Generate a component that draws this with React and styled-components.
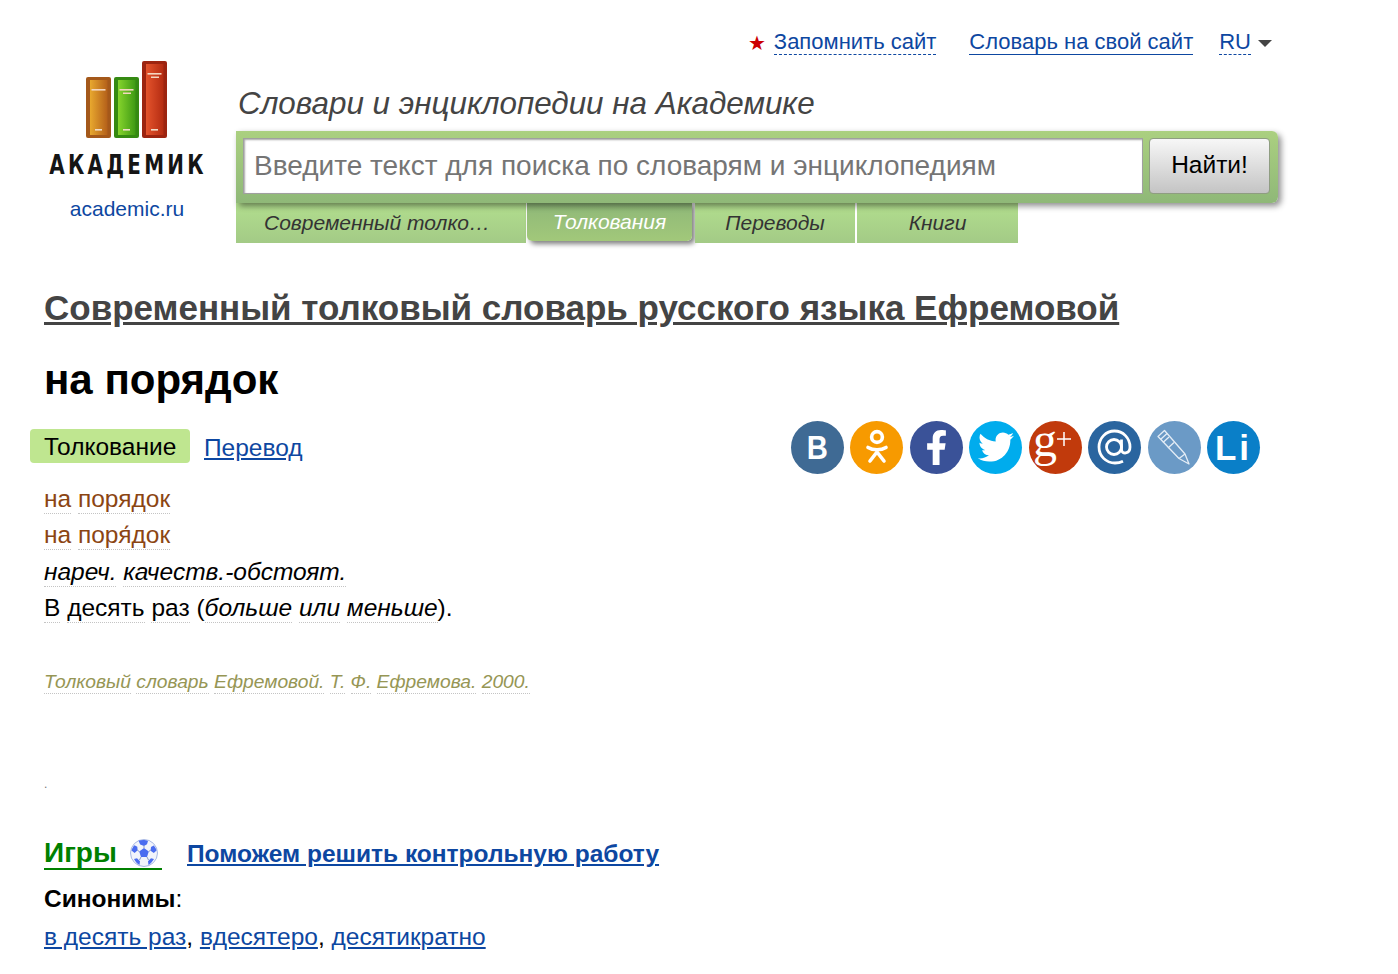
import React from "react";
import styled, { createGlobalStyle } from "styled-components";
import { FaFacebookF, FaTwitter } from "react-icons/fa";

const Global = createGlobalStyle`
  html, body { margin: 0; padding: 0; background: #fff; }
  body { font-family: "Liberation Sans", Arial, sans-serif; color: #000; }
  a { color: #0d47a1; }
`;

const Page = styled.div`width: 1398px; min-height: 974px; box-sizing: border-box; overflow: hidden;`;
const Header = styled.header`display: flex; padding: 29px 0 0 18px;`;
const LogoColumn = styled.div`width: 218px; display: flex; flex-direction: column; align-items: center; padding-top: 31px;`;
const LogoWord = styled.div`
  font-family: "DejaVu Sans Condensed", "DejaVu Sans", sans-serif; font-weight: 700; font-size: 27px; line-height: 32px;
  letter-spacing: 4px; margin-top: 9px; color: #151515; transform: translateX(1px) scaleX(.82); white-space: nowrap;
`;
const LogoLink = styled.a`font-size: 21px; line-height: 24px; margin-top: 16px; text-decoration: none; color: #0d47a1;`;
const HeaderMain = styled.div`width: 1044px;`;
const TopLinks = styled.div`display: flex; justify-content: flex-end; align-items: flex-start; height: 26px; padding-right: 8px; font-size: 22px; line-height: 26px;`;
const Star = styled.span`color: #cc0000; font-size: 20px; margin-right: 8px; line-height: 28px;`;
const TopLink = styled.a`
  text-decoration: none; color: #0d47a1; height: 25px; border-bottom: 1px ${p => p.$dashed ? "dashed" : "solid"} #0d47a1; margin-right: ${p => p.$gap || 0}px;
`;
const Caret = styled.span`width: 0; height: 0; border-left: 7px solid transparent; border-right: 7px solid transparent; border-top: 7px solid #444; margin: 11px 0 0 7px;`;
const Tagline = styled.div`font-size: 31.4px; font-style: italic; color: #444; line-height: 36px; margin: 31px 0 9px 2px; white-space: nowrap;`;
const SearchBar = styled.form`
  width: 1042px; height: 72px; box-sizing: border-box; padding: 7px 8px 9px 7px; display: flex; gap: 6px; position: relative; z-index: 2;
  background: linear-gradient(#abd080, #8fb878); border-radius: 0 6px 6px 0; box-shadow: 3px 3px 6px rgba(0,0,0,.45); margin: 0;
`;
const SearchInput = styled.input`
  flex: 1; min-width: 0; box-sizing: border-box; height: 56px; padding: 0 10px; font: 28px "Liberation Sans", Arial, sans-serif;
  background: #fff; border: 1px solid #a0a0a0; outline: none; box-shadow: inset 1px 1px 2px rgba(0,0,0,.35);
  &::placeholder { color: #757575; opacity: 1; }
`;
const SearchButton = styled.button`
  width: 121px; height: 56px; box-sizing: border-box; font: 24.5px "Liberation Sans", Arial, sans-serif; color: #000;
  background: linear-gradient(#f7f7f7, #c4c4c4); border: 1px solid #8f9d82; border-radius: 4px; padding: 0 0 3px;
`;
const Tabs = styled.nav`display: flex; height: 40px;`;
const Tab = styled.div`
  width: ${p => p.$w}px; margin-right: ${p => p.$mr ?? 2}px; padding-right: ${p => p.$pr || 0}px; display: flex; align-items: center; justify-content: center; height: 40px; box-sizing: border-box;
  font-size: 21px; font-style: italic; color: #333; white-space: nowrap;
  background: linear-gradient(#b2de8e, #a3ca86);
`;
const ActiveTab = styled(Tab)`
  height: 38px; color: #fff; background: linear-gradient(#8fb878, #a2c87a); border-radius: 0 0 5px 5px;
  box-shadow: 3px 3px 5px rgba(0,0,0,.5);
`;
const Content = styled.main`padding: 41px 0 0 44px;`;
const DictTitle = styled.a`display: block; font-size: 35px; font-weight: 700; color: #444; line-height: 48px; text-decoration: underline; white-space: nowrap; width: max-content;`;
const Word = styled.h1`font-size: 42px; font-weight: 700; line-height: 48px; margin: 24px 0 0; color: #000;`;
const ArticleBar = styled.div`display: flex; justify-content: space-between; align-items: center; margin: 17px 0 0 -14px; width: 1230px; height: 54px;`;
const Switch = styled.div`display: flex; align-items: flex-start; height: 36px; margin-top: -2px;`;
const Badge = styled.span`background: #bfe690; border-radius: 4px; height: 34px; line-height: 36px; padding: 0 14px; font-size: 24.5px; width: 132px;`;
const SwitchLink = styled.a`margin: 1px 0 0 14px; line-height: 36px; font-size: 24.5px; color: #0d47a1;`;
const Shares = styled.div`display: flex; gap: 6.5px; margin-top: -2px;`;
const Share = styled.a`
  width: 53px; height: 53px; border-radius: 50%; background: ${p => p.$bg}; color: #fff; display: flex; align-items: center; justify-content: center; flex: none;
  font-family: "Liberation Sans", Arial, sans-serif; font-weight: 700; font-size: ${p => p.$size || 30}px; letter-spacing: ${p => p.$ls || 0}px; text-decoration: none; line-height: 1;
`;
const NarrowB = styled.span`display: block; transform: scaleX(.86);`;
const GPlus = styled.span`font-family: "Liberation Serif", serif; font-weight: 400; font-size: 48px; margin: -14px 0 0 -6px; display: flex; align-items: flex-start;`;
const Article = styled.div`margin-top: 6px; font-size: 24.5px; line-height: 36.4px;`;
const Line = styled.div`color: ${p => p.$c || "#000"}; font-style: ${p => p.$i ? "italic" : "normal"};`;
const Dotted = styled.span`border-bottom: 1px dotted #c4c4c4; padding-bottom: 1px; font-style: ${p => p.$i ? "italic" : "inherit"};`;
const Source = styled.div`margin-top: 40.4px; font-size: 19.25px; line-height: 29px; font-style: italic; color: #969655;`;
const Dot = styled.div`margin-top: 78px; font-size: 12px; line-height: 20px; color: #777;`;
const Promo = styled.div`display: flex; align-items: baseline; margin-top: 44px;`;
const GamesLink = styled.a`display: inline-flex; align-items: center; font-size: 28px; font-weight: 700; color: #008000; text-decoration: none; border-bottom: 2px solid #008000; height: 30px; line-height: 30px; gap: 12px; width: 118px;`;
const HelpLink = styled.a`margin-left: 25px; font-size: 24.5px; font-weight: 700; color: #0d47a1;`;
const Synonyms = styled.div`margin-top: 14px; font-size: 24.5px; line-height: 30px;`;
const SynLinks = styled.div`margin-top: 8px; font-size: 24.5px; line-height: 30px;`;

const Words = ({ text, i }) => {
  const parts = text.split(" ");
  return <>{parts.map((w, k) => <React.Fragment key={k}>{k > 0 && " "}<Dotted $i={i}>{w}</Dotted></React.Fragment>)}</>;
};

const Book = ({ x, y, h, c1, c2, edge, id, second }) => (
  <g>
    <defs>
      <linearGradient id={id} x1="0" x2="1" y1="0" y2="0">
        <stop offset="0" stopColor={c1} /><stop offset="1" stopColor={c2} />
      </linearGradient>
    </defs>
    <rect x={x} y={y} width="25" height={h} rx="2" fill={edge} />
    <rect x={x + 4} y={y + 3} width="17.500" height={h - 6} fill={`url(#${id})`} />
    <rect x={x + 5.5} y={y + 12} width="14" height="1.6" fill="#f4d6c0" />
    {second && <rect x={x + 9} y={y + 15.5} width="8" height="1.5" fill="#f4d6c0" />}
    <rect x={x + 9} y={y + h - 9} width="7" height="1.6" fill="#f0dcc8" />
  </g>
);

const Books = () => (
  <svg width="84" height="80" viewBox="0 0 84 80">
    <Book id="b1" x={1} y={17} h={61} c1="#e8a82e" c2="#b4601a" edge="#a4581a" />
    <Book id="b2" x={29} y={17} h={61} c1="#86d42c" c2="#3f9a14" edge="#358a12" second />
    <Book id="b3" x={57} y={1} h={77} c1="#e4532c" c2="#b42c12" edge="#9c2410" second />
  </svg>
);

const Ball = () => (
  <svg width="30" height="30" viewBox="0 0 30 30">
    <circle cx="15" cy="15" r="13.5" fill="#f2f4fb" stroke="#a8b8e4" strokeWidth="1" />
    <path d="M15 10l4.800 3.500-1.800 5.600h-6l-1.800-5.600zM9.500 2.800c3-1.200 7-1 9.500.2l-1 3.200-3 1.800-3.800-1.600zM2.500 12.500c.6-2 1.600-3.800 3-5.200l2.800 1.500.3 3.500-3 2.700zM27.500 12.500c-.5-2-1.500-3.500-2.700-5l-2.800 1.500-.4 3.700 3.200 2.200zM5 21l3-.8 3 3-.5 3.800C8.500 26 6.500 23.800 5 21zM25 21l-3-.8-3 3 .5 3.800c2-1 4-3.500 5.500-6z" fill="#4a6cf0" />
    <path d="M15 10V7.500M10.200 13.500l-2-1.500M19.800 13.500l2-1.500M12 19l-1.500 3M18 19l1.500 3" stroke="#8898c0" strokeWidth="1" />
  </svg>
);

const OkIcon = () => (
  <svg width="24" height="36" viewBox="0 0 24 36" fill="none" stroke="#fff" strokeWidth="3.600" strokeLinecap="round">
    <circle cx="12" cy="8" r="5.400" />
    <path d="M3 18.500c5 3 13 3 18 0M12 21v3M12 23L5 32M12 23l7 9" />
  </svg>
);

const AtIcon = () => (
  <svg width="36" height="36" viewBox="0 0 36 36" fill="none" stroke="#fff" strokeWidth="2.800">
    <circle cx="17" cy="18" r="7.500" />
    <path d="M24.500 10.500v10c0 5 8.500 5 8.500-2.500C33 9 26 2 17.500 2S2 9 2 18s7 16 16 16c3 0 5.500-.6 8-1.800" />
  </svg>
);

const PenIcon = () => (
  <svg width="36" height="38" viewBox="0 0 36 38" fill="none" stroke="#e4edf6" strokeWidth="1.300" strokeLinejoin="round">
    <path d="M2 8.500L8.500 2.500 29 26l4 10-10-5.500z" />
    <path d="M4.500 11.500l6.500-6M23 30.500l6-4.500M7 14.500L13 9M12 20l6-5.500" />
  </svg>
);

export default function App() {
  return (
    <Page>
      <Global />
      <Header>
        <LogoColumn>
          <Books />
          <LogoWord>АКАДЕМИК</LogoWord>
          <LogoLink href="#">academic.ru</LogoLink>
        </LogoColumn>
        <HeaderMain>
          <TopLinks>
            <Star>★</Star>
            <TopLink $dashed $gap={33} href="#">Запомнить сайт</TopLink>
            <TopLink $gap={26} href="#">Словарь на свой сайт</TopLink>
            <TopLink $dashed href="#">RU</TopLink>
            <Caret />
          </TopLinks>
          <Tagline>Словари и энциклопедии на Академике</Tagline>
          <SearchBar onSubmit={e => e.preventDefault()}>
            <SearchInput placeholder="Введите текст для поиска по словарям и энциклопедиям" />
            <SearchButton>Найти!</SearchButton>
          </SearchBar>
          <Tabs>
            <Tab $w={290} $mr={1} $pr={8}>Современный толко…</Tab>
            <ActiveTab $w={165} $mr={3}>Толкования</ActiveTab>
            <Tab $w={160}>Переводы</Tab>
            <Tab $w={161}>Книги</Tab>
          </Tabs>
        </HeaderMain>
      </Header>
      <Content>
        <DictTitle href="#">Современный толковый словарь русского языка Ефремовой</DictTitle>
        <Word>на порядок</Word>
        <ArticleBar>
          <Switch>
            <Badge>Толкование</Badge>
            <SwitchLink href="#">Перевод</SwitchLink>
          </Switch>
          <Shares>
            <Share $bg="#3f6a94" $size={34}><NarrowB>B</NarrowB></Share>
            <Share $bg="#f79a00"><OkIcon /></Share>
            <Share $bg="#3a5298"><FaFacebookF size={35} /></Share>
            <Share $bg="#00aced"><FaTwitter size={36} /></Share>
            <Share $bg="#c13a0c"><GPlus>g<svg width="14" height="14" viewBox="0 0 14 14" stroke="#fff" strokeWidth="1.500" style={{ marginTop: 16 }}><path d="M7 0v14M0 7h14" /></svg></GPlus></Share>
            <Share $bg="#2a659f"><AtIcon /></Share>
            <Share $bg="#6b9ac6"><PenIcon /></Share>
            <Share $bg="#0a7fc8" $size={35} $ls={3}>Li</Share>
          </Shares>
        </ArticleBar>
        <Article>
          <Line $c="#8b4513"><Words text="на порядок" /></Line>
          <Line $c="#8b4513"><Dotted>на</Dotted> <Dotted>поря́док</Dotted></Line>
          <Line $i><Words text="нареч. качеств.-обстоят." /></Line>
          <Line><Words text="В десять раз" /> (<Words text="больше или меньше" i />).</Line>
        </Article>
        <Source><Words text="Толковый словарь Ефремовой. Т. Ф. Ефремова. 2000." /></Source>
        <Dot>.</Dot>
        <Promo>
          <GamesLink href="#">Игры <Ball /></GamesLink>
          <HelpLink href="#">Поможем решить контрольную работу</HelpLink>
        </Promo>
        <Synonyms><b>Синонимы</b>:</Synonyms>
        <SynLinks><a href="#">в десять раз</a>, <a href="#">вдесятеро</a>, <a href="#">десятикратно</a></SynLinks>
      </Content>
    </Page>
  );
}
